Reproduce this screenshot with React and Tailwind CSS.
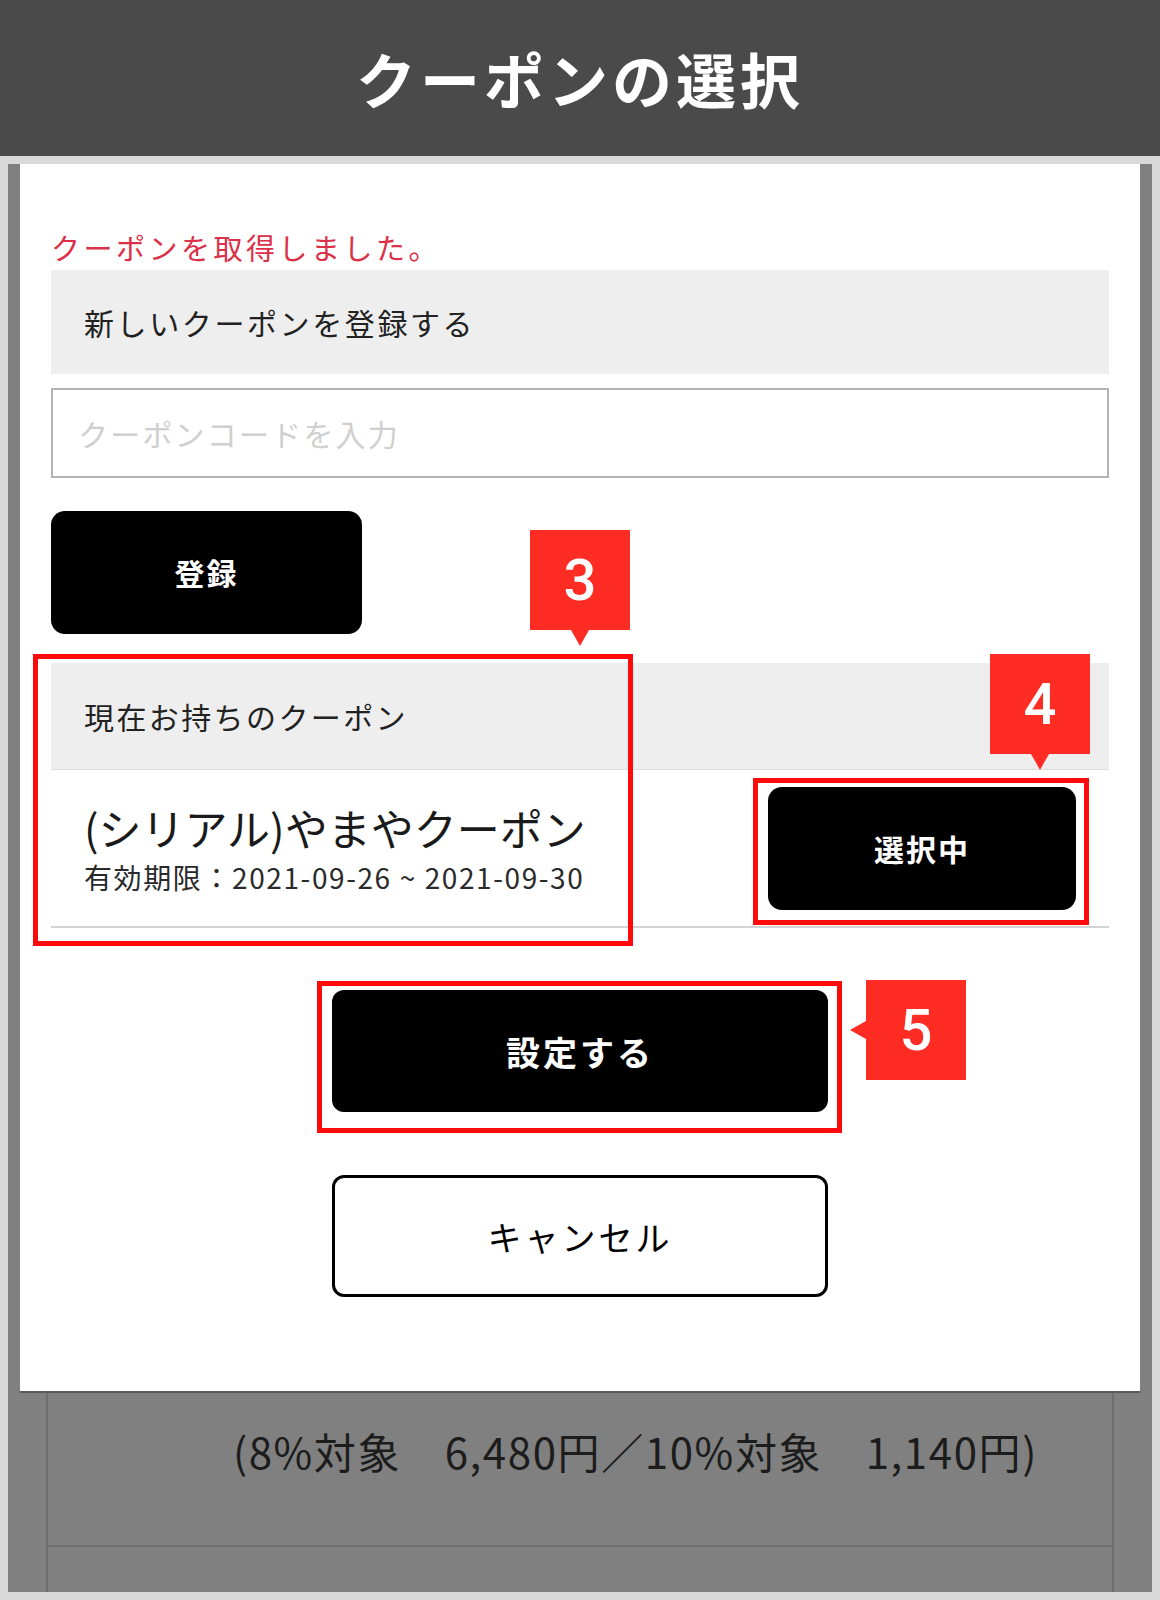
import React from 'react';

const font = { fontFamily: '"Noto Sans CJK JP", "Noto Sans", sans-serif' };

const Marker = ({ n, className, dir = 'down' }) => (
  <div className={`absolute w-[100px] h-[100px] bg-[#fe2c22] flex items-center justify-center ${className}`}>
    <span className="text-white text-[58px] font-medium leading-none" style={{ fontFamily: 'Roboto, sans-serif' }}>{n}</span>
    {dir === 'down' ? (
      <div className="absolute left-[41px] top-[100px] w-0 h-0 border-l-[9px] border-r-[9px] border-t-[16px] border-l-transparent border-r-transparent border-t-[#fe2c22]" />
    ) : (
      <div className="absolute left-[-16px] top-[41px] w-0 h-0 border-t-[9px] border-b-[9px] border-r-[16px] border-t-transparent border-b-transparent border-r-[#fe2c22]" />
    )}
  </div>
);

const App = () => {
  return (
    <div className="w-[1160px] h-[1600px] bg-[#d9d9d9] flex flex-col overflow-hidden" style={font}>
      <header className="h-[156px] bg-[#4a4a4a] flex items-center justify-center shrink-0">
        <h1 className="text-white text-[60px] font-bold tracking-[4px] leading-none">クーポンの選択</h1>
      </header>

      <div className="mt-[8px] mx-[8px] h-[1428px] bg-[#808080] flex flex-col">
        {/* modal */}
        <div className="relative mx-[12px] h-[1229px] shrink-0 bg-white border-b-2 border-[#5a5a5a] px-[31px] pt-[65px]">
          <p className="text-[29px] leading-[36px] tracking-[3.5px] text-[#dc3048]">クーポンを取得しました。</p>

          <div className="mt-[5px] h-[104px] bg-[#eeeeee] flex items-center pl-[33px]">
            <span className="text-[30px] tracking-[2.6px] text-[#222]">新しいクーポンを登録する</span>
          </div>

          <input
            type="text"
            placeholder="クーポンコードを入力"
            className="mt-[14px] block w-full h-[90px] border-2 border-[#b3b3b3] px-[25px] text-[30px] tracking-[2.2px] placeholder:text-[#cfcfcf] outline-none"
            style={font}
          />

          <button className="mt-[33px] w-[311px] h-[123px] bg-black rounded-[14px] text-white text-[30px] font-bold tracking-[2px]">
            登録
          </button>

          <div className="mt-[29px]">
            <div className="h-[107px] bg-[#eeeeee] border-b border-[#dddddd] flex items-center pl-[33px]">
              <span className="text-[30px] tracking-[2.4px] text-[#222]">現在お持ちのクーポン</span>
            </div>
            <div className="h-[158px] border-b-2 border-[#d4d4d4] flex items-center justify-between pl-[33px] pr-[33px]">
              <div className="flex flex-col">
                <span className="text-[43px] leading-[52px] tracking-[0px] text-[#1a1a1a]">(シリアル)やまやクーポン</span>
                <span className="mt-[6px] text-[28px] leading-[36px] tracking-[1.6px] text-[#2a2a2a]">有効期限：2021-09-26 ~ 2021-09-30</span>
              </div>
              <button className="w-[308px] h-[123px] bg-black rounded-[14px] text-white text-[30px] font-bold tracking-[2px]">
                選択中
              </button>
            </div>
          </div>

          <button className="mt-[62px] mx-auto block w-[496px] h-[122px] bg-black rounded-[12px] text-white text-[34px] font-bold tracking-[3px]">
            設定する
          </button>
          <button className="mt-[63px] mx-auto block w-[496px] h-[122px] bg-white border-[3px] border-black rounded-[12px] text-black text-[34px] tracking-[3px]">
            キャンセル
          </button>

          {/* annotations */}
          <div className="absolute left-[13px] top-[490px] w-[600px] h-[292px] border-[5px] border-[#ff0a0a]" />
          <Marker n="3" className="left-[510px] top-[366px]" />
          <div className="absolute left-[733px] top-[614px] w-[336px] h-[147px] border-[5px] border-[#ff0a0a]" />
          <Marker n="4" className="left-[970px] top-[490px]" />
          <div className="absolute left-[297px] top-[817px] w-[525px] h-[152px] border-[5px] border-[#ff0a0a]" />
          <Marker n="5" className="left-[846px] top-[816px]" dir="left" />
        </div>

        {/* page behind the overlay */}
        <div className="mx-[38px] flex-1 border-x-2 border-[#6e6e6e] flex flex-col">
          <div className="h-[152px] flex items-center justify-end pr-[74px] pb-[38px]">
            <span className="text-[42px] tracking-[1.6px] text-[#1c1c1c]">(8%対象　6,480円／10%対象　1,140円)</span>
          </div>
          <div className="flex-1 border-t-2 border-[#6e6e6e]" />
        </div>
      </div>
    </div>
  );
};

export default App;
